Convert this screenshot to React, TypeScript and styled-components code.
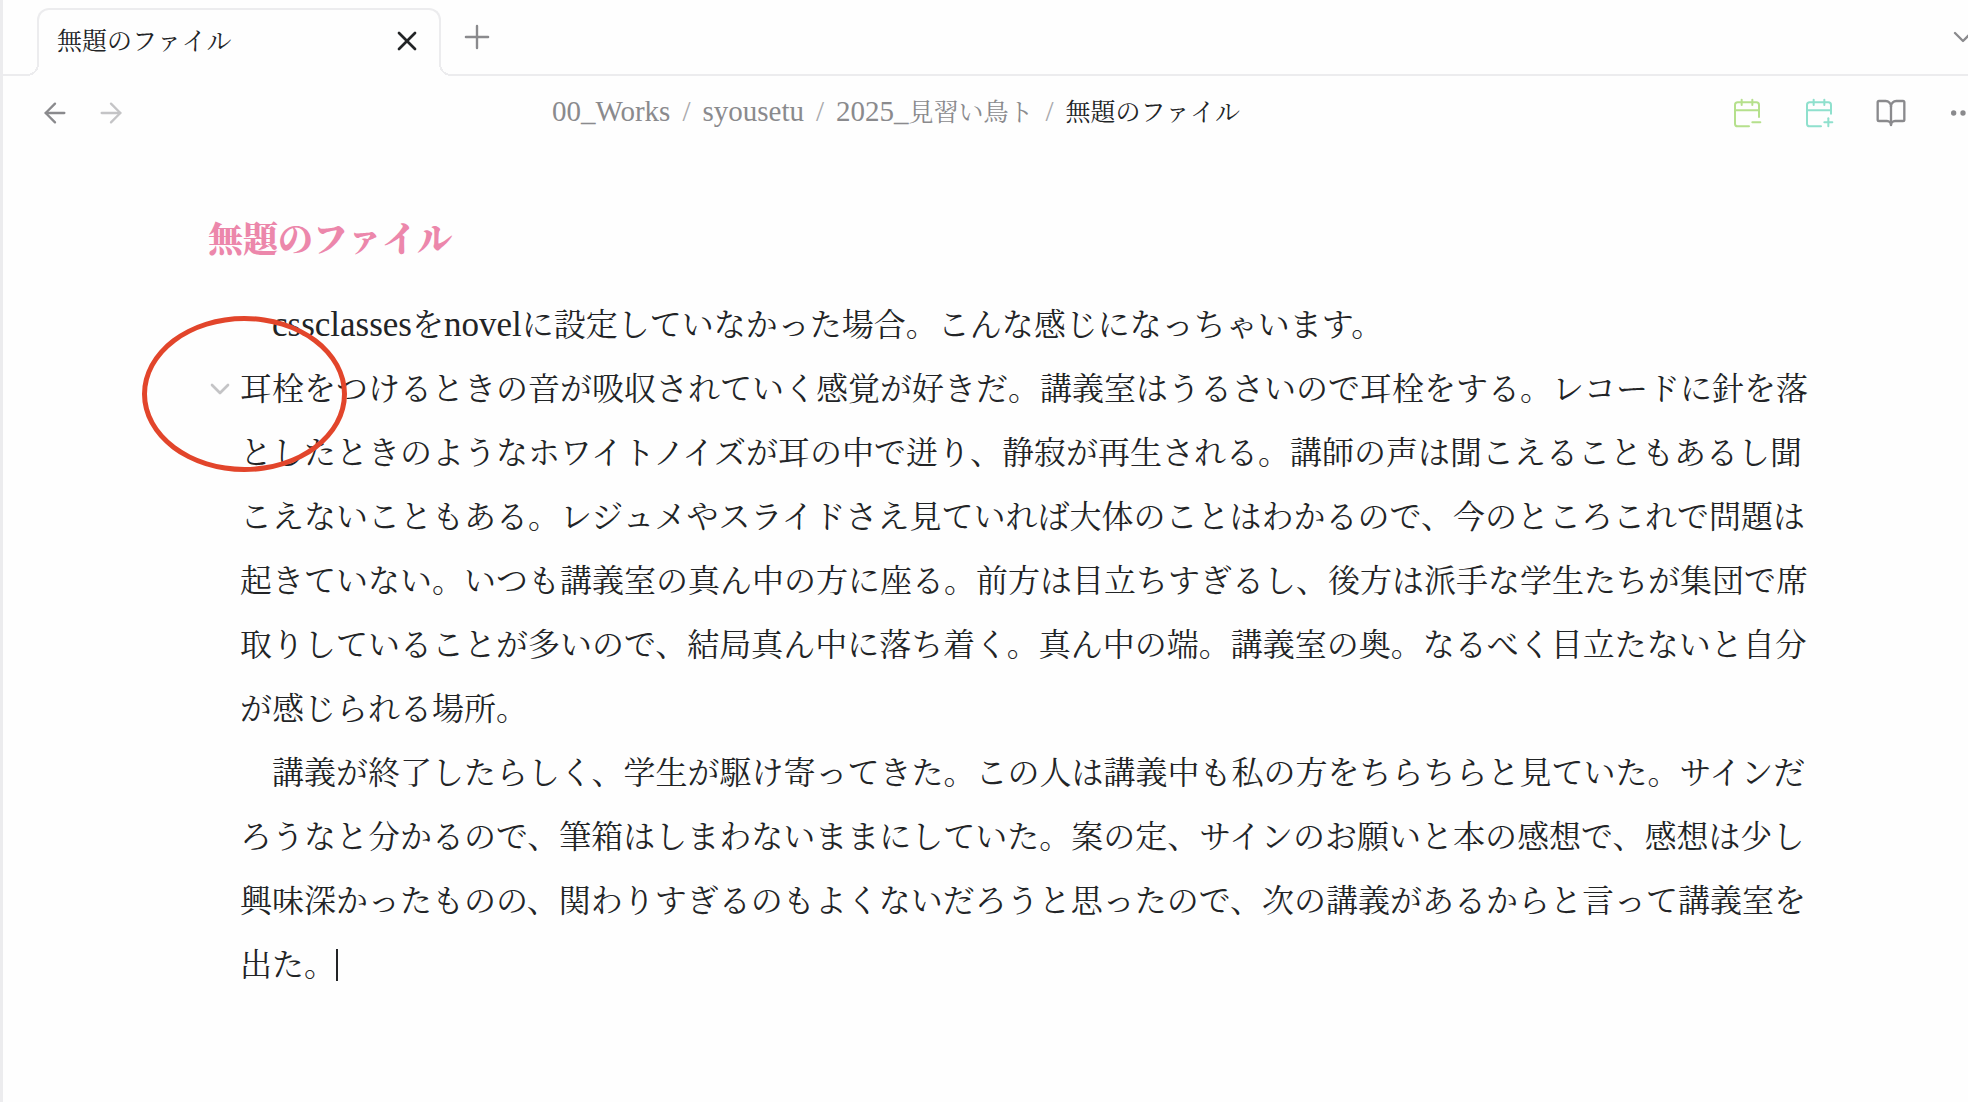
import React from "react";
import styled, { createGlobalStyle } from "styled-components";
import {
  ArrowLeft,
  ArrowRight,
  BookOpen,
  CalendarMinus,
  CalendarPlus,
  ChevronDown,
  Ellipsis,
  Plus,
  X,
} from "lucide-react";

const color = {
  page: "#fefefe",
  text: "#222426",
  muted: "#8a8a8d",
  faint: "#c4c4c6",
  line: "#ececee",
  title: "#ec87ab",
  green: "#b5e08c",
  mint: "#8fe0cd",
  mark: "#e2452b",
};

const GlobalStyle = createGlobalStyle`
  * { box-sizing: border-box; }
  body {
    margin: 0;
    background: ${color.page};
    color: ${color.text};
    font-family: "Liberation Serif", "Noto Serif CJK JP", "Noto Sans CJK JP", serif;
    font-kerning: normal;
  }
`;

const Pane = styled.div`
  min-height: 100vh;
  border-left: 3px solid ${color.line};
  overflow: hidden;
`;

const TabBar = styled.header`
  display: flex;
  align-items: stretch;
  height: 76px;
  padding: 8px 0 0 34px;
  box-shadow: inset 0 -2px ${color.line};
`;

const Tab = styled.div`
  position: relative;
  display: flex;
  align-items: center;
  justify-content: space-between;
  width: 404px;
  padding: 0 16px 4px 18px;
  background: ${color.page};
  border: 2px solid ${color.line};
  border-bottom: 0;
  border-radius: 12px 12px 0 0;
  font-size: 25px;

  &::before,
  &::after {
    content: "";
    position: absolute;
    bottom: 0;
    width: 12px;
    height: 12px;
  }
  &::before {
    right: 100%;
    background: radial-gradient(circle at 0 0, ${color.page} 10px, ${color.line} 10px 12px, ${color.page} 12px);
  }
  &::after {
    left: 100%;
    background: radial-gradient(circle at 100% 0, ${color.page} 10px, ${color.line} 10px 12px, ${color.page} 12px);
  }
`;

const TabLabel = styled.span`
  padding-bottom: 4px;
`;

const IconButton = styled.button<{ $tone?: string }>`
  display: flex;
  align-items: center;
  justify-content: center;
  flex: none;
  width: 32px;
  height: 32px;
  padding: 0;
  border: 0;
  background: none;
  color: ${(p) => p.$tone ?? color.muted};
  cursor: pointer;

  svg { flex: none; }
`;

const TabTools = styled.div`
  display: flex;
  flex: 1;
  justify-content: space-between;
  align-items: center;
  padding: 0 0 10px 20px;
  margin-right: -11px;
`;

const Toolbar = styled.nav`
  display: flex;
  align-items: center;
  height: 74px;
  padding-left: 36px;
`;

const History = styled.div`
  display: flex;
  gap: 24px;
`;

const Crumbs = styled.ol`
  display: flex;
  flex: 1;
  justify-content: center;
  align-items: baseline;
  gap: 12px;
  margin: 0;
  padding: 0;
  list-style: none;
  font-size: 25px;
  line-height: 32px;
  white-space: nowrap;
`;

const Crumb = styled.li<{ $current?: boolean }>`
  display: flex;
  align-items: baseline;
  gap: 12px;
  color: ${(p) => (p.$current ? color.text : color.muted)};

  &:not(:first-child)::before {
    content: "/";
    font-size: 29px;
    line-height: 1;
    color: #a9a9ac;
  }
  a {
    color: inherit;
    text-decoration: none;
  }
`;

const Latin = styled.span<{ $size: number }>`
  font-size: ${(p) => p.$size}px;
  line-height: 1;
`;

const Actions = styled.div`
  display: flex;
  gap: 40px;
  margin: 0 -11px 0 66px;
`;

const Editor = styled.main`
  padding: 62px 144px 90px 205px;
`;

const Title = styled.h1`
  margin: 0 0 23px;
  font-size: 35px;
  line-height: 58px;
  font-weight: 900;
  color: ${color.title};
`;

const Body = styled.article`
  padding-left: 32px;
  font-size: 32px;
  line-height: 64px;
`;

const Paragraph = styled.p`
  position: relative;
  margin: 0;
`;

const FoldButton = styled(IconButton)`
  position: absolute;
  left: -36px;
  top: 16px;
`;

const Circle = styled.span`
  position: absolute;
  left: -98px;
  top: -41px;
  width: 205px;
  height: 156px;
  border: 5px solid ${color.mark};
  border-radius: 50%;
  pointer-events: none;
`;

const Caret = styled.span`
  display: inline-block;
  width: 2px;
  height: 32px;
  background: ${color.text};
  vertical-align: -5px;
`;

const stroke = 1.75;

export default function App() {
  return (
    <>
      <GlobalStyle />
      <Pane lang="ja">
        <TabBar>
          <Tab>
            <TabLabel>無題のファイル</TabLabel>
            <IconButton $tone={color.text} aria-label="閉じる">
              <X size={32} strokeWidth={2} />
            </IconButton>
          </Tab>
          <TabTools>
            <IconButton aria-label="新しいタブ">
              <Plus size={38} strokeWidth={1.5} />
            </IconButton>
            <IconButton aria-label="タブ一覧">
              <ChevronDown size={32} strokeWidth={stroke} />
            </IconButton>
          </TabTools>
        </TabBar>

        <Toolbar>
          <History>
            <IconButton aria-label="戻る">
              <ArrowLeft size={32} strokeWidth={stroke} />
            </IconButton>
            <IconButton $tone={color.faint} aria-label="進む">
              <ArrowRight size={32} strokeWidth={stroke} />
            </IconButton>
          </History>
          <Crumbs>
            <Crumb>
              <a href="#works"><Latin $size={29}>00_Works</Latin></a>
            </Crumb>
            <Crumb>
              <a href="#syousetu"><Latin $size={29}>syousetu</Latin></a>
            </Crumb>
            <Crumb>
              <a href="#2025"><Latin $size={29}>2025_</Latin>見習い鳥ト</a>
            </Crumb>
            <Crumb $current>無題のファイル</Crumb>
          </Crumbs>
          <Actions>
            <IconButton $tone={color.green} aria-label="前の日">
              <CalendarMinus size={32} strokeWidth={1.5} />
            </IconButton>
            <IconButton $tone={color.mint} aria-label="次の日">
              <CalendarPlus size={32} strokeWidth={1.5} />
            </IconButton>
            <IconButton aria-label="閲覧表示">
              <BookOpen size={32} strokeWidth={stroke} />
            </IconButton>
            <IconButton aria-label="その他">
              <Ellipsis size={32} strokeWidth={2} />
            </IconButton>
          </Actions>
        </Toolbar>

        <Editor>
          <Title>無題のファイル</Title>
          <Body>
            <Paragraph>
              {"\u3000"}
              <Latin $size={35}>cssclasses</Latin>を<Latin $size={35}>novel</Latin>
              に設定していなかった場合。こんな感じになっちゃいます。
            </Paragraph>
            <Paragraph>
              <FoldButton $tone={color.faint} aria-label="折りたたむ">
                <ChevronDown size={32} strokeWidth={2} />
              </FoldButton>
              耳栓をつけるときの音が吸収されていく感覚が好きだ。講義室はうるさいので耳栓をする。レコードに針を落としたときのようなホワイトノイズが耳の中で迸り、静寂が再生される。講師の声は聞こえることもあるし聞こえないこともある。レジュメやスライドさえ見ていれば大体のことはわかるので、今のところこれで問題は起きていない。いつも講義室の真ん中の方に座る。前方は目立ちすぎるし、後方は派手な学生たちが集団で席取りしていることが多いので、結局真ん中に落ち着く。真ん中の端。講義室の奥。なるべく目立たないと自分が感じられる場所。
              <Circle />
            </Paragraph>
            <Paragraph>
              {"\u3000"}講義が終了したらしく、学生が駆け寄ってきた。この人は講義中も私の方をちらちらと見ていた。サインだろうなと分かるので、筆箱はしまわないままにしていた。案の定、サインのお願いと本の感想で、感想は少し興味深かったものの、関わりすぎるのもよくないだろうと思ったので、次の講義があるからと言って講義室を出た。
              <Caret />
            </Paragraph>
          </Body>
        </Editor>
      </Pane>
    </>
  );
}
